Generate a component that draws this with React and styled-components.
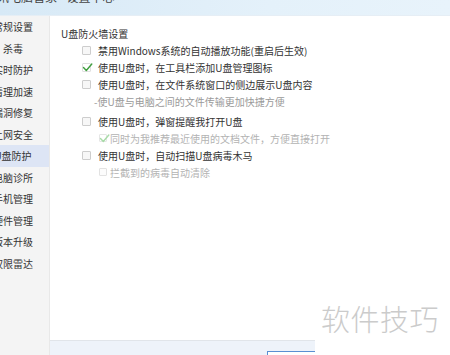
import React from "react";
import styled, { createGlobalStyle, css } from "styled-components";

const Global = createGlobalStyle`
  html, body { margin: 0; padding: 0; background: #fff; }
  body { overflow: hidden; font-family: "Noto Sans CJK SC", "Noto Sans", sans-serif; }
`;

const Window = styled.div`
  position: relative;
  width: 450px;
  height: 355px;
  display: flex;
  flex-direction: column;
  overflow: hidden;
  background: #fff;
`;

const TitleBar = styled.div`
  height: 15px;
  flex: none;
  background: linear-gradient(90deg, #d7e9f6, #e4f1fa 60%, #e8f3fb);
  border-bottom: 1px solid #e6eef5;
  overflow: hidden;
`;

const TitleText = styled.div`
  margin: -10px 0 0 -15px;
  font-size: 12px;
  line-height: 14px;
  color: #444;
  white-space: nowrap;
`;

const Body = styled.div`
  flex: 1;
  display: flex;
  min-height: 0;
`;

const Sidebar = styled.nav`
  width: 49px;
  flex: none;
  background: #f4f4f4;
  border-right: 1px solid #e8e8e8;
  overflow: hidden;
`;

const NavItem = styled.div`
  height: 21.5px;
  display: flex;
  align-items: center;
  justify-content: center;
  padding-right: 23px;
  font-size: 10px;
  color: #333;
  white-space: nowrap;
  background: ${(p) => (p.$active ? "#dde5f5" : "transparent")};
`;

const Main = styled.div`
  flex: 1;
  display: flex;
  flex-direction: column;
  min-width: 0;
`;

const Content = styled.div`
  flex: 1;
  padding: 8.5px 0 0 11px;
  display: flex;
  flex-direction: column;
`;

const Heading = styled.div`
  height: 17px;
  line-height: 17px;
  font-size: 10px;
  color: #333;
`;

const Row = styled.div`
  height: 17px;
  display: flex;
  align-items: center;
  padding-left: ${(p) => p.$indent}px;
  margin-top: ${(p) => p.$gap || 0}px;
  font-size: 10px;
  white-space: nowrap;
  color: ${(p) => (p.$tone === "desc" ? "#9a9a9a" : p.$tone === "off" ? "#b3b3b3" : "#333")};
`;

const Box = styled.span`
  position: relative;
  flex: none;
  box-sizing: border-box;
  width: ${(p) => (p.$small ? 8 : 9)}px;
  height: ${(p) => (p.$small ? 8 : 9)}px;
  margin-right: ${(p) => (p.$small ? 3 : 7)}px;
  border: 1px solid ${(p) => (p.$off ? "#e2e2e2" : "#cdcdcd")};
  background: ${(p) => (p.$off ? "#fcfcfc" : "#f7f7f7")};
  border-radius: 1px;
  ${(p) =>
    p.$checked &&
    css`
      border-color: ${p.$off ? "#e6e6e6" : "#e0e0e0"};
      background: #fff;
    `}
  svg {
    position: absolute;
    left: -1px;
    top: -2px;
  }
`;

const Check = ({ color }) => (
  <svg width="11" height="11" viewBox="0 0 11 11">
    <polyline points="1.5,5.5 4.3,8.5 9.8,2" fill="none" stroke={color} strokeWidth="1.4" strokeLinecap="round" strokeLinejoin="round" />
  </svg>
);

const Footer = styled.div`
  height: 15px;
  flex: none;
  box-sizing: border-box;
  border-top: 1px solid #e1e5ea;
  background: #eef3fa;
  padding: 10px 0 0 217px;
  overflow: hidden;
`;

const FooterButton = styled.div`
  width: 70px;
  height: 20px;
  box-sizing: border-box;
  border: 1px solid #5a8fd2;
  background: #fff;
`;

const Watermark = styled.div`
  position: absolute;
  left: 315px;
  top: 298px;
  width: 135px;
  height: 57px;
  background: #fff;
  box-sizing: border-box;
  padding: 3px 0 0 6px;
  font-size: 29px;
  line-height: 34px;
  font-weight: 300;
  letter-spacing: 0.5px;
  color: #cbcbcb;
  white-space: nowrap;
`;

const navItems = ["常规设置", "杀毒", "实时防护", "清理加速", "漏洞修复", "上网安全", "U盘防护", "电脑诊所", "手机管理", "硬件管理", "版本升级", "权限雷达"];

const Option = ({ checked, off, small, indent, gap, children }) => (
  <Row $indent={indent} $gap={gap} $tone={off ? "off" : undefined}>
    <Box $checked={checked} $off={off} $small={small}>
      {checked && <Check color={off ? "#a8dba8" : "#3f9f3f"} />}
    </Box>
    {children}
  </Row>
);

export default function App() {
  return (
    <Window>
      <Global />
      <TitleBar>
        <TitleText>腾讯电脑管家 - 设置中心</TitleText>
      </TitleBar>
      <Body>
        <Sidebar>
          {navItems.map((n) => (
            <NavItem key={n} $active={n === "U盘防护"}>{n}</NavItem>
          ))}
        </Sidebar>
        <Main>
          <Content>
            <Heading>U盘防火墙设置</Heading>
            <Option indent={21}>禁用Windows系统的自动播放功能(重启后生效)</Option>
            <Option indent={21} checked>使用U盘时，在工具栏添加U盘管理图标</Option>
            <Option indent={21}>使用U盘时，在文件系统窗口的侧边展示U盘内容</Option>
            <Row $indent={33} $tone="desc">-使U盘与电脑之间的文件传输更加快捷方便</Row>
            <Option indent={21} gap={3}>使用U盘时，弹窗提醒我打开U盘</Option>
            <Option indent={38} small off checked>同时为我推荐最近使用的文档文件，方便直接打开</Option>
            <Option indent={21}>使用U盘时，自动扫描U盘病毒木马</Option>
            <Option indent={38} small off>拦截到的病毒自动清除</Option>
          </Content>
          <Footer>
            <FooterButton />
          </Footer>
        </Main>
      </Body>
      <Watermark>软件技巧</Watermark>
    </Window>
  );
}
